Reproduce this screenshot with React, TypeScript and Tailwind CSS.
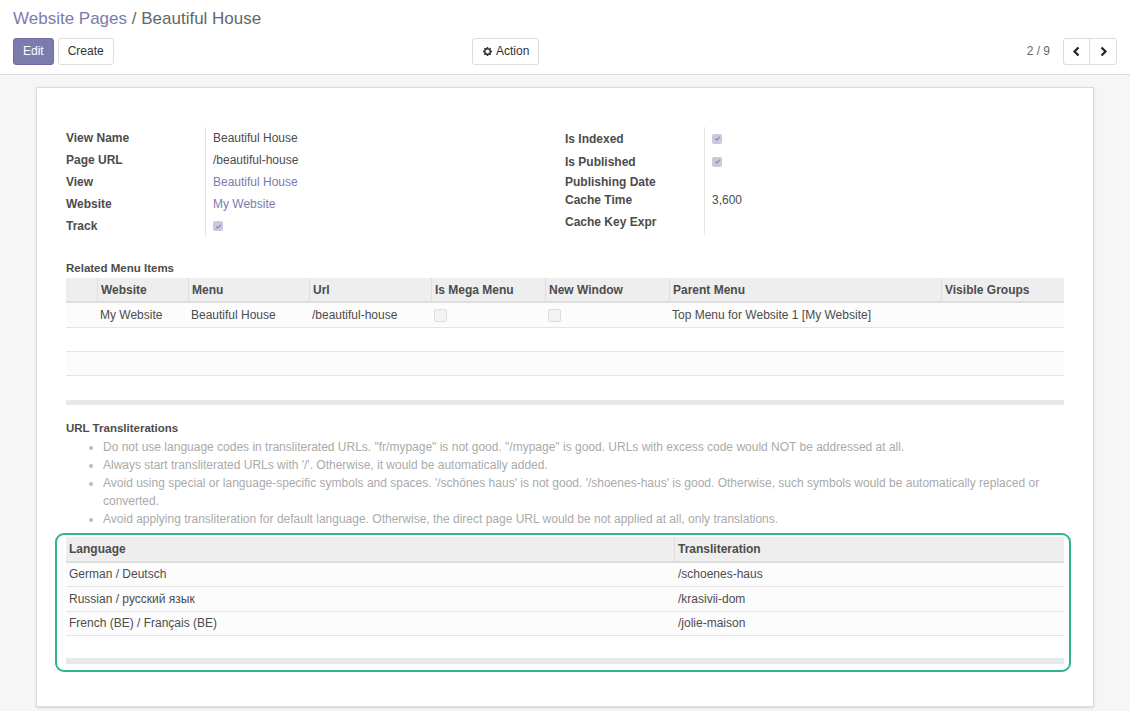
import React from "react";

const Check = ({ on }: { on?: boolean }) => (
  <span className={`inline-flex items-center justify-center w-[10px] h-[10px] rounded-[2px] ${on ? "bg-[#c9c8dd]" : "bg-[#f3f3f3] border border-[#ddd] w-[13px] h-[13px]"}`}>
    {on && (
      <svg width="7" height="7" viewBox="0 0 8 8"><path d="M1.5 4.2 3.2 5.8 6.5 2.2" stroke="#7c7bad" strokeWidth="1.2" fill="none" /></svg>
    )}
  </span>
);

const Field = ({ label, children, h = "h-[22px]" }: { label: string; children?: React.ReactNode; h?: string }) => (
  <div className={`flex items-center ${h}`}>
    <div className="w-[139px] font-bold text-[#4c4c4c]">{label}</div>
    <div className="border-l border-[#e5e5e5] h-full flex items-center pl-[7px]">{children}</div>
  </div>
);

export default function App() {
  const cols = [
    ["", 31],
    ["Website", 91],
    ["Menu", 121],
    ["Url", 122],
    ["Is Mega Menu", 114],
    ["New Window", 124],
    ["Parent Menu", 272],
    ["Visible Groups", 123],
  ] as const;
  return (
    <div className="w-[1130px] h-[711px] overflow-hidden bg-white text-[12px] text-[#4c4c4c]" style={{ fontFamily: '"Liberation Sans", Arial, sans-serif' }}>
      <div className="h-[75px] border-b border-[#ddd] px-[13px] bg-white">
        <div className="pt-[6px] text-[17px] h-[32px]">
          <span className="text-[#7c7bad]">Website Pages</span>
          <span className="text-[#666]"> / Beautiful House</span>
        </div>
        <div className="flex items-center h-[28px] mt-[5px]">
          <button className="h-[27px] px-[9px] bg-[#7c7bad] text-white rounded-[3px] border border-[#6f6ea2]">Edit</button>
          <button className="h-[27px] px-[9px] ml-[4px] bg-white border border-[#ddd] rounded-[3px] text-[#333]">Create</button>
          <button className="absolute left-[472px] h-[27px] px-[9px] bg-white border border-[#ddd] rounded-[3px] text-[#333] flex items-center gap-[3px]">
            <svg width="11" height="11" viewBox="0 0 16 16"><path fill="#333" d="M8 5a3 3 0 100 6 3 3 0 000-6zm6.5 4.2-1.6.3a5 5 0 01-.5 1.2l.9 1.4-1.4 1.4-1.4-.9a5 5 0 01-1.2.5l-.3 1.6H7l-.3-1.6a5 5 0 01-1.200-.5l-1.4.9-1.4-1.4.9-1.4a5 5 0 01-.5-1.2L1.5 9.2V6.8l1.6-.3a5 5 0 01.5-1.2l-.9-1.4 1.4-1.4 1.4.9a5 5 0 011.2-.5L7 1.5h2l.3 1.6a5 5 0 011.2.5l1.4-.9 1.4 1.4-.9 1.4a5 5 0 01.5 1.2l1.6.3z"/></svg>
            Action
          </button>
          <div className="ml-auto flex items-center">
            <span className="text-[#666] mr-[13px]">2 / 9</span>
            <div className="flex border border-[#ddd] rounded-[3px] h-[27px]">
              <span className="w-[26px] flex items-center justify-center border-r border-[#ddd]">
                <svg width="9" height="11" viewBox="0 0 9 11"><path d="M6.5 1.5 2.5 5.5l4 4" stroke="#222" strokeWidth="2.2" fill="none" /></svg>
              </span>
              <span className="w-[26px] flex items-center justify-center">
                <svg width="9" height="11" viewBox="0 0 9 11"><path d="M2.5 1.5l4 4-4 4" stroke="#222" strokeWidth="2.2" fill="none" /></svg>
              </span>
            </div>
          </div>
        </div>
      </div>
      <div className="bg-[#f6f6f6] h-[636px] pt-[12px] px-[36px]">
        <div className="bg-white border border-[#ddd] shadow-sm w-[1058px] h-[620px] px-[29px] pt-[39px]">
          <div className="flex">
            <div className="w-[499px]">
              <Field label="View Name">Beautiful House</Field>
              <Field label="Page URL">/beautiful-house</Field>
              <Field label="View"><span className="text-[#7c7bad]">Beautiful House</span></Field>
              <Field label="Website"><span className="text-[#7c7bad]">My Website</span></Field>
              <Field label="Track"><Check on /></Field>
            </div>
            <div>
              <Field label="Is Indexed" h="h-[23px]"><Check on /></Field>
              <Field label="Is Published" h="h-[23px]"><Check on /></Field>
              <Field label="Publishing Date" h="h-[18px]" />
              <Field label="Cache Time" h="h-[18px]">3,600</Field>
              <Field label="Cache Key Expr" h="h-[26px]" />
            </div>
          </div>
          <div className="font-bold mt-[23px] text-[11.5px]">Related Menu Items</div>
          <div className="w-[998px] mt-[1px]">
            <div className="flex h-[25px] bg-[#eee] border-b-2 border-[#ddd] font-bold">
              {cols.map(([c, w], i) => (
                <div key={i} style={{ width: w }} className={`flex items-center px-[3px] ${i > 0 ? "border-l border-[#ddd]" : ""}`}>{c}</div>
              ))}
            </div>
            <div className="flex h-[25px] bg-[#fcfcfc] border-b border-[#e5e5e5]">
              {["", "My Website", "Beautiful House", "/beautiful-house", "c", "c", "Top Menu for Website 1 [My Website]", ""].map((c, i) => (
                <div key={i} style={{ width: cols[i][1] }} className="flex items-center px-[3px]">{c === "c" ? <Check /> : c}</div>
              ))}
            </div>
            <div className="h-[24px] border-b border-[#e5e5e5]" />
            <div className="h-[24px] bg-[#fcfcfc] border-b border-[#e5e5e5]" />
            <div className="h-[24px]" />
            <div className="h-[5px] bg-[#e8e8e8]" />
          </div>
          <div className="font-bold mt-[15px] text-[11.5px]">URL Transliterations</div>
          <ul className="list-disc pl-[37px] text-[#aaa] text-[12px] leading-[18px] mt-[0px] marker:text-[#bbb]">
            <li>Do not use language codes in transliterated URLs. "fr/mypage" is not good. "/mypage" is good. URLs with excess code would NOT be addressed at all.</li>
            <li>Always start transliterated URLs with '/'. Otherwise, it would be automatically added.</li>
            <li>Avoid using special or language-specific symbols and spaces. '/schönes haus' is not good. '/shoenes-haus' is good. Otherwise, such symbols would be automatically replaced or converted.</li>
            <li>Avoid applying transliteration for default language. Otherwise, the direct page URL would be not applied at all, only translations.</li>
          </ul>
          <div className="mt-[5px] -ml-[11px] w-[1016px] h-[139px] border-2 border-[#2eb28f] rounded-[9px] pl-[9px] pt-[2px]">
            <div className="w-[998px]">
              <div className="flex h-[26px] bg-[#eee] border-b-2 border-[#ddd] font-bold items-center">
                <div className="w-[608px] px-[3px]">Language</div>
                <div className="px-[3px] border-l border-[#ddd] h-full flex items-center">Transliteration</div>
              </div>
              {[
                ["German / Deutsch", "/schoenes-haus"],
                ["Russian / русский язык", "/krasivii-dom"],
                ["French (BE) / Français (BE)", "/jolie-maison"],
              ].map(([a, b]) => (
                <div key={a} className="flex h-[24.5px] items-center bg-[#fcfcfc] border-b border-[#e5e5e5]">
                  <div className="w-[608px] px-[3px]">{a}</div>
                  <div className="px-[4px]">{b}</div>
                </div>
              ))}
              <div className="h-[22px]" />
              <div className="h-[6px] bg-[#e8e8e8]" />
            </div>
          </div>
        </div>
      </div>
    </div>
  );
}
